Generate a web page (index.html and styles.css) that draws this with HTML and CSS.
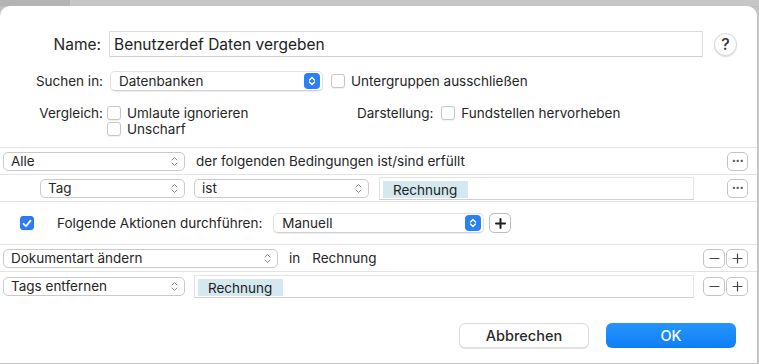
FILE: index.html
```html
<!DOCTYPE html>
<html lang="de">
<head>
<meta charset="utf-8">
<title>Intelligente Regel</title>
<link rel="stylesheet" href="styles.css">
</head>
<body>
<div class="topbar"><div class="topbar-left"></div></div>
<div class="dialog">
  <div class="form">
    <div class="name-row">
      <span class="lbl lbl-big">Name:</span>
      <div class="textfield">Benutzerdef Daten vergeben</div>
      <button class="help">?</button>
    </div>
    <div class="search-row">
      <span class="lbl">Suchen in:</span>
      <div class="popup popup-plain w-search">Datenbanken<span class="stepper-blue"><svg width="8" height="10" viewBox="0 0 8 10"><path d="M1.5 4 L4 1.5 L6.5 4 M1.5 6 L4 8.5 L6.5 6" fill="none" stroke="#fff" stroke-width="1.4" stroke-linecap="round" stroke-linejoin="round"/></svg></span></div>
      <span class="check"></span>
      <span class="opt-text">Untergruppen ausschließen</span>
    </div>
    <div class="compare-row">
      <span class="lbl">Vergleich:</span>
      <div class="opts">
        <div class="opt"><span class="check"></span><span class="opt-text">Umlaute ignorieren</span></div>
        <div class="opt"><span class="check"></span><span class="opt-text">Unscharf</span></div>
      </div>
      <div class="display">
        <span class="lbl-inline">Darstellung:</span>
        <span class="check"></span>
        <span class="opt-text">Fundstellen hervorheben</span>
      </div>
    </div>
  </div>

  <div class="criteria">
    <div class="crow">
      <div class="popup w-all">Alle<span class="stepper"><svg width="7" height="11" viewBox="0 0 7 11"><path d="M1 4 L3.5 1.5 L6 4 M1 7 L3.5 9.5 L6 7" fill="none" stroke="#8a8a8a" stroke-width="1" stroke-linecap="round" stroke-linejoin="round"/></svg></span></div>
      <span class="row-text">der folgenden Bedingungen ist/sind erfüllt</span>
      <span class="spacer"></span>
      <button class="sq dots">···</button>
    </div>
    <div class="crow indent">
      <div class="popup w-tag">Tag<span class="stepper"><svg width="7" height="11" viewBox="0 0 7 11"><path d="M1 4 L3.5 1.5 L6 4 M1 7 L3.5 9.5 L6 7" fill="none" stroke="#8a8a8a" stroke-width="1" stroke-linecap="round" stroke-linejoin="round"/></svg></span></div>
      <div class="popup w-ist">ist<span class="stepper"><svg width="7" height="11" viewBox="0 0 7 11"><path d="M1 4 L3.5 1.5 L6 4 M1 7 L3.5 9.5 L6 7" fill="none" stroke="#8a8a8a" stroke-width="1" stroke-linecap="round" stroke-linejoin="round"/></svg></span></div>
      <div class="tokenfield w-tok1"><span class="token">Rechnung</span></div>
      <span class="spacer"></span>
      <button class="sq dots">···</button>
    </div>
    <div class="arow">
      <span class="check checked"><svg width="10" height="9" viewBox="0 0 10 9"><path d="M1.5 4.8 L4 7.2 L8.5 1.6" fill="none" stroke="#fff" stroke-width="1.8" stroke-linecap="round" stroke-linejoin="round"/></svg></span>
      <span class="action-label">Folgende Aktionen durchführen:</span>
      <div class="popup popup-plain w-manual">Manuell<span class="stepper-blue"><svg width="8" height="10" viewBox="0 0 8 10"><path d="M1.5 4 L4 1.5 L6.5 4 M1.5 6 L4 8.5 L6.5 6" fill="none" stroke="#fff" stroke-width="1.4" stroke-linecap="round" stroke-linejoin="round"/></svg></span></div>
      <button class="sq plus-bold"><svg width="11" height="11" viewBox="0 0 11 11"><path d="M5.5 1 V10 M1 5.5 H10" stroke="#1e1e1e" stroke-width="2" stroke-linecap="round"/></svg></button>
    </div>
    <div class="crow">
      <div class="popup w-doc">Dokumentart ändern<span class="stepper"><svg width="7" height="11" viewBox="0 0 7 11"><path d="M1 4 L3.5 1.5 L6 4 M1 7 L3.5 9.5 L6 7" fill="none" stroke="#8a8a8a" stroke-width="1" stroke-linecap="round" stroke-linejoin="round"/></svg></span></div>
      <span class="row-text in-text">in</span>
      <span class="row-text val-text">Rechnung</span>
      <span class="spacer"></span>
      <div class="pm">
        <button class="sq pmb"><svg width="11" height="11" viewBox="0 0 11 11"><path d="M1 5.5 H10" stroke="#444" stroke-width="1.2" stroke-linecap="round"/></svg></button>
        <button class="sq pmb"><svg width="11" height="11" viewBox="0 0 11 11"><path d="M5.5 1 V10 M1 5.5 H10" stroke="#444" stroke-width="1.2" stroke-linecap="round"/></svg></button>
      </div>
    </div>
    <div class="crow last">
      <div class="popup w-all">Tags entfernen<span class="stepper"><svg width="7" height="11" viewBox="0 0 7 11"><path d="M1 4 L3.5 1.5 L6 4 M1 7 L3.5 9.5 L6 7" fill="none" stroke="#8a8a8a" stroke-width="1" stroke-linecap="round" stroke-linejoin="round"/></svg></span></div>
      <div class="tokenfield w-tok2"><span class="token">Rechnung</span></div>
      <span class="spacer"></span>
      <div class="pm">
        <button class="sq pmb"><svg width="11" height="11" viewBox="0 0 11 11"><path d="M1 5.5 H10" stroke="#444" stroke-width="1.2" stroke-linecap="round"/></svg></button>
        <button class="sq pmb"><svg width="11" height="11" viewBox="0 0 11 11"><path d="M5.5 1 V10 M1 5.5 H10" stroke="#444" stroke-width="1.2" stroke-linecap="round"/></svg></button>
      </div>
    </div>
  </div>

  <div class="footer">
    <button class="btn btn-cancel">Abbrechen</button>
    <button class="btn btn-ok">OK</button>
  </div>
</div>
</body>
</html>
```

FILE: styles.css
```css
* { box-sizing: border-box; }
html, body { margin: 0; padding: 0; }
body {
  width: 759px;
  height: 364px;
  overflow: hidden;
  background: #c5c5c5;
  font-family: Inter, "Noto Sans", sans-serif;
  font-size: 13px;
  color: #262626;
}
button { font-family: inherit; color: inherit; padding: 0; margin: 0; }

.topbar {
  height: 7px;
  background: #c6c6c6;
  border-bottom: 1px solid #bdbdbd;
}
.topbar-left { width: 70px; height: 6px; background: #b4b4b4; }

.dialog {
  margin-right: 2px;
  height: 357px;
  background: #ffffff;
  border-radius: 10px 10px 0 0;
  margin-top: -1px;
  display: flex;
  flex-direction: column;
}

/* top form */
.form { padding-top: 25px; }
.lbl {
  width: 103px;
  flex: none;
  text-align: right;
  font-size: 13.5px;
}
.lbl-big { font-size: 15.5px; padding-right: 2px; }

.name-row { display: flex; align-items: center; height: 26px; }
.textfield {
  margin-left: 6px;
  width: 594px;
  height: 26px;
  border: 1px solid #dcdcdc;
  border-bottom-color: #cfcfcf;
  font-size: 15.5px;
  line-height: 25px;
  padding-left: 4px;
  color: #222;
}
.help {
  margin-left: 11px;
  width: 23px;
  height: 23px;
  border-radius: 50%;
  border: 1px solid #d6d6d6;
  background: #fff;
  box-shadow: 0 1px 1px rgba(0,0,0,0.12);
  font-size: 16px;
  font-weight: 500;
  line-height: 20px;
  text-align: center;
  color: #333;
}

.search-row { display: flex; align-items: center; margin-top: 14px; height: 20px; }
.popup {
  position: relative;
  display: flex;
  align-items: center;
  height: 19px;
  background: #fff;
  border: 1px solid #cacaca;
  border-radius: 5px;
  padding-left: 7px;
  font-size: 13.5px;
  flex: none;
}
.popup-plain {
  border: 1px solid #e2e2e2;
  border-bottom-color: #d2d2d2;
  box-shadow: 0 1px 1px rgba(0,0,0,0.08);
  height: 20px;
  padding-left: 8px;
}
.w-search { margin-left: 7px; width: 213px; }
.stepper-blue {
  position: absolute;
  right: 2px;
  top: 1px;
  width: 16px;
  height: 16px;
  border-radius: 4px;
  background: #2d7ff5;
  display: flex;
  align-items: center;
  justify-content: center;
}
.stepper {
  position: absolute;
  right: 6px;
  top: 3px;
  display: flex;
}
.check {
  flex: none;
  width: 14px;
  height: 14px;
  border: 1px solid #c6c6c6;
  border-radius: 3px;
  background: #fff;
  box-shadow: 0 0.5px 1px rgba(0,0,0,0.06);
  display: flex;
  align-items: center;
  justify-content: center;
}
.search-row .check { margin-left: 8px; }
.opt-text { margin-left: 6px; font-size: 13.5px; }

.compare-row { display: flex; align-items: flex-start; margin-top: 15px; height: 30px; }
.compare-row .lbl { line-height: 14px; }
.opts { margin-left: 4px; width: 250px; display: flex; flex-direction: column; gap: 2px; }
.opt { display: flex; align-items: center; height: 14px; }
.display { display: flex; align-items: center; height: 14px; }
.lbl-inline { font-size: 13.5px; margin-right: 8px; }

/* criteria */
.criteria { margin-top: 11px; border-top: 1px solid #e3e3e3; }
.crow {
  display: flex;
  align-items: center;
  height: 27px;
  border-bottom: 1px solid #e3e3e3;
  padding: 0 9px 0 3px;
}
.crow.last { border-bottom: none; height: 28px; }
.crow.indent { padding-left: 40px; }
.w-all { width: 182px; }
.w-tag { width: 145px; }
.w-ist { width: 175px; margin-left: 9px; }
.w-doc { width: 275px; }
.row-text { margin-left: 11px; font-size: 13.5px; }
.in-text { margin-left: 11px; }
.val-text { margin-left: 12px; }
.spacer { flex: 1; }

.sq {
  height: 19px;
  border: 1px solid #c4c4c4;
  border-radius: 5px;
  background: #fff;
  display: flex;
  align-items: center;
  justify-content: center;
}
.dots { width: 21px; font-size: 13px; font-weight: 700; letter-spacing: -0.5px; line-height: 1; color: #555; padding-bottom: 1px; }

.tokenfield {
  margin-left: 10px;
  height: 23px;
  border: 1px solid #e4e4e4;
  border-bottom-color: #d0d0d0;
  background: #fff;
  display: flex;
  align-items: flex-end;
  padding: 0 0 1px 3px;
}
.w-tok1 { width: 315px; }
.w-tok2 { width: 500px; margin-left: 9px; }
.token {
  display: inline-block;
  background: #d5e7ef;
  height: 17px;
  width: 85px;
  padding-left: 10px;
  font-size: 13.5px;
  line-height: 19px;
  color: #222;
}

.arow {
  display: flex;
  align-items: center;
  height: 43px;
  border-bottom: 1px solid #e3e3e3;
  padding-left: 20px;
}
.check.checked {
  background: #2c7cf6;
  border-color: #2a76ea;
}
.action-label { margin-left: 23px; font-size: 13.5px; }
.w-manual { margin-left: 11px; width: 211px; }
.plus-bold { margin-left: 5px; width: 22px; height: 20px; border-color: #bdbdbd; }

.pm { display: flex; gap: 1px; }
.pmb { width: 22px; }

/* footer */
.footer {
  display: flex;
  justify-content: flex-end;
  gap: 17px;
  padding-right: 21px;
  margin-top: 23px;
}
.btn {
  width: 130px;
  height: 25px;
  border-radius: 6px;
  font-size: 14.5px;
  font-weight: 500;
}
.btn-cancel {
  background: #fff;
  border: 1px solid #dedede;
  box-shadow: 0 1px 1px rgba(0,0,0,0.12);
  color: #2a2a2a;
}
.btn-ok {
  background: linear-gradient(#2595fc, #0f7ef5);
  border: none;
  color: #fff;
  font-weight: 500;
}
```
